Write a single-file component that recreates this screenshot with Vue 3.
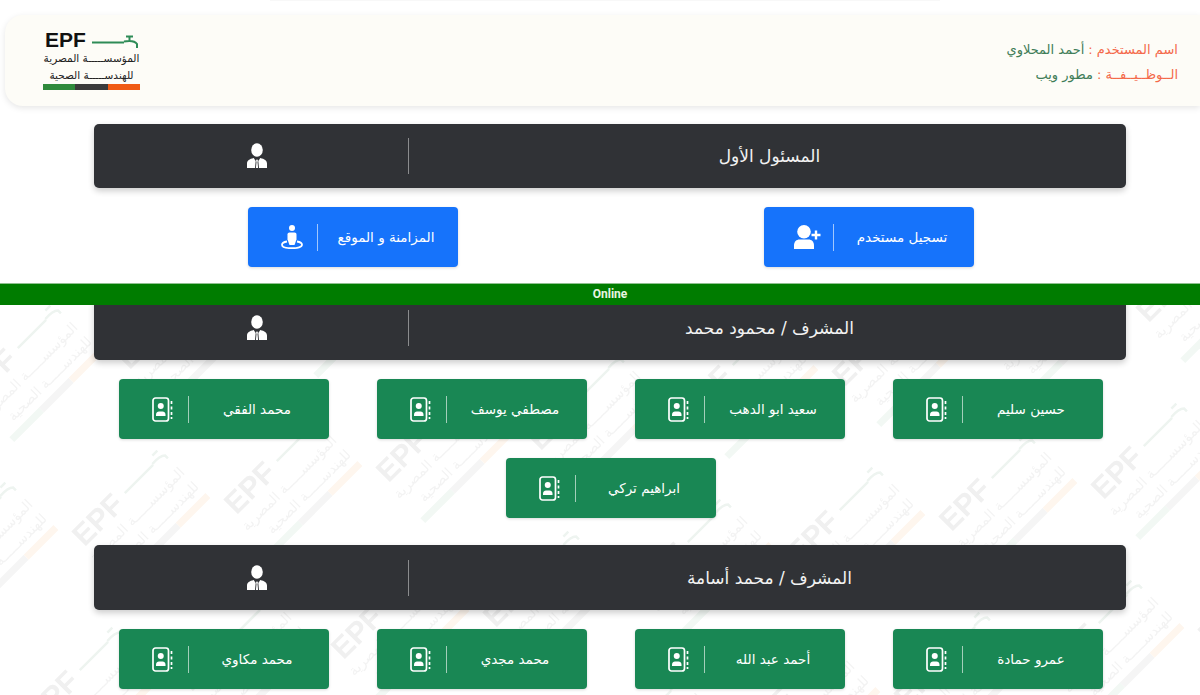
<script setup>
const ax = 152, ay = -32, bx = 107, by = 145
const marks = []
for (let m = -8; m <= 10; m++) {
  for (let n = -3; n <= 4; n++) {
    const x = 257 + m * ax + n * bx
    const y = 495 + m * ay + n * by
    if (x > -60 && x < 1260 && y > 270 && y < 770) marks.push({ id: `${m}_${n}`, x, y })
  }
}
const groups = [
  { title: 'المشرف / محمود محمد', rows: [['حسين سليم', 'سعيد ابو الدهب', 'مصطفي يوسف', 'محمد الفقي'], ['ابراهيم تركي']] },
  { title: 'المشرف / محمد أسامة', rows: [['عمرو حمادة', 'أحمد عبد الله', 'محمد مجدي', 'محمد مكاوي']] }
]
</script>

<template>
  <div class="page">
    <div class="top-sliver"></div>
    <svg class="watermark" width="1200" height="390" viewBox="0 305 1200 390" aria-hidden="true">
      <g v-for="k in marks" :key="k.id" :transform="`translate(${k.x} ${k.y}) rotate(-45)`">
        <text class="wm-epf" x="-29" y="0">EPF</text>
        <path d="M38 -10H78M78 -11c6-.5 12 0 15 3v4M84 -17h7" fill="none" stroke="#eef4f0" stroke-width="2.500" />
        <text class="wm-ar" x="95" y="19" text-anchor="end">المؤسســـــة المصرية</text>
        <text class="wm-ar" x="95" y="39" text-anchor="end">للهندســـــة الصحية</text>
        <rect x="-31" y="47" width="42" height="7" fill="#f2f8f4" />
        <rect x="11" y="47" width="42" height="7" fill="#f5f5f5" />
        <rect x="53" y="47" width="42" height="7" fill="#fef6ee" />
      </g>
    </svg>

    <header class="topbar">
      <div class="user">
        <div><span class="lbl">اسم المستخدم :</span><span class="val">أحمد المحلاوي</span></div>
        <div><span class="lbl">الــوظــيــفــة :</span><span class="val">مطور ويب</span></div>
      </div>
      <div class="logo">
        <div class="logo-top">
          <svg width="46" height="16" viewBox="0 0 46 16">
            <path d="M0 10.500H32M32 9.500c5-.8 11-.5 13 2.500v4M34 4.500h7M37.500 4.500v5" fill="none" stroke="#2e8b57" stroke-width="2" />
          </svg>
          <span class="logo-epf">EPF</span>
        </div>
        <div class="logo-ar">المؤسســـــة المصرية</div>
        <div class="logo-ar">للهندســـــة الصحية</div>
        <div class="logo-bar"><i class="c1"></i><i class="c2"></i><i class="c3"></i></div>
      </div>
    </header>

    <main class="content">
      <div class="head head-first">
        <div class="head-title">المسئول الأول</div>
        <div class="head-icon">
          <svg width="20" height="26" viewBox="0 0 20 26"><use href="#boss" /></svg>
        </div>
      </div>

      <div class="row row-blue">
        <button class="btn blue">
          <span class="btn-text">تسجيل مستخدم</span>
          <span class="btn-icon">
            <svg width="27" height="24" viewBox="0 0 27 24" fill="#fff">
              <circle cx="10" cy="6.800" r="6.800" />
              <path d="M0 24v-3.500C0 16.500 2.500 14.500 5.500 14.500h9c3 0 5.500 2 5.500 6V24z" />
              <path d="M17.500 10h9M22 5.500v9" stroke="#fff" stroke-width="2.400" fill="none" />
            </svg>
          </span>
        </button>
        <button class="btn blue">
          <span class="btn-text">المزامنة و الموقع</span>
          <span class="btn-icon">
            <svg width="22" height="24" viewBox="0 0 22 24" fill="#fff">
              <circle cx="11" cy="3" r="3" />
              <path d="M8.500 7.500h5c1.200 0 2 .8 2 2v5l-2 5.500h-5l-2-5.500v-5c0-1.200.8-2 2-2z" />
              <path d="M6 16.500C2.700 17 1 18.200 1 19.700 1 22 5.500 23.200 11 23.200s10-1.200 10-3.500c0-1.500-1.700-2.700-5-3.200" fill="none" stroke="#fff" stroke-width="1.800" />
            </svg>
          </span>
        </button>
      </div>

      <div class="online">Online</div>

      <template v-for="(g, gi) in groups" :key="gi">
        <div class="head" :class="gi === 0 ? 'head-under' : 'head-next'">
          <div class="head-title">{{ g.title }}</div>
          <div class="head-icon">
            <svg width="20" height="26" viewBox="0 0 20 26"><use href="#boss" /></svg>
          </div>
        </div>
        <div v-for="(r, ri) in g.rows" :key="ri" class="row row-green">
          <button v-for="name in r" :key="name" class="btn green">
            <span class="btn-text">{{ name }}</span>
            <span class="btn-icon">
              <svg width="21" height="25" viewBox="0 0 21 25" fill="none" stroke="#fff">
                <rect x="1" y="1" width="15.500" height="23" rx="2.500" stroke-width="1.700" />
                <circle cx="8.750" cy="9" r="3" fill="#fff" stroke="none" />
                <path d="M4 19v-1.500c0-2 1.500-3 3-3h3.500c1.500 0 3 1 3 3V19z" fill="#fff" stroke="none" />
                <path d="M19.500 4v3M19.500 9.500v3M19.500 15v3M19.500 20v2" stroke-width="1.700" />
              </svg>
            </span>
          </button>
        </div>
      </template>
    </main>

    <svg width="0" height="0" class="defs" aria-hidden="true">
      <symbol id="boss" viewBox="0 0 20 26">
        <ellipse cx="10" cy="7" rx="5.800" ry="6.800" fill="#fff" />
        <path d="M0 25v-4.500c0-3 2.500-4.500 6.700-5.500l2 3-.7 7zM20 25v-4.500c0-3-2.500-4.500-6.700-5.500l-2 3 .7 7z" fill="#fff" />
        <path d="M10 16l1 1.800-.5 1.200.6 6H8.900l.6-6-.5-1.200z" fill="#fff" />
      </symbol>
    </svg>
  </div>
</template>

<style>
html, body { margin: 0; background: #fff; }
</style>

<style scoped>
.page {
  position: relative;
  width: 1200px;
  height: 695px;
  overflow: hidden;
  background: #fff;
  font-family: "DejaVu Sans", "Noto Sans", sans-serif;
}
.defs { position: absolute; }
.top-sliver { position: absolute; left: 270px; top: 0; width: 670px; height: 1px; background: #f8f8f8; }
.watermark { position: absolute; left: 0; top: 305px; filter: blur(.7px); }
.wm-epf { font: 700 30px "Liberation Sans", sans-serif; fill: #f0f0f0; }
.wm-ar { font: 14px "DejaVu Sans", sans-serif; fill: #f3f3f3; }

.topbar {
  position: relative;
  box-sizing: border-box;
  margin: 15px 0 0 5px;
  width: 1195px;
  height: 91px;
  background: #fdfcf7;
  border-radius: 18px 0 0 18px;
  box-shadow: 0 2px 6px rgba(0, 0, 0, .1);
  display: flex;
  justify-content: space-between;
  align-items: center;
  padding: 0 22px 0 38px;
  direction: rtl;
}
.user { font-size: 13px; line-height: 25px; padding-top: 3px; }
.lbl { color: #f4694a; margin-left: 4px; }
.val { color: #3f7d58; }
.logo { width: 97px; direction: ltr; color: #222; margin-top: -2px; }
.logo-top { display: flex; flex-direction: row-reverse; justify-content: space-between; align-items: flex-end; height: 20px; }
.logo-top svg { margin-right: 2px; margin-bottom: 2px; }
.logo-epf { font: 700 21px/20px "Liberation Sans", sans-serif; color: #111; margin-left: 2px; }
.logo-ar { font-size: 10.500px; line-height: 17px; text-align: center; direction: rtl; white-space: nowrap; font-weight: 500; }
.logo-bar { display: flex; height: 6px; margin-top: 0; }
.logo-bar i { flex: 1; }
.c1 { background: #2f8a3c; }
.c2 { background: #3b3b3b; }
.c3 { background: #f05a14; }

.content {
  position: relative;
  direction: rtl;
  display: flex;
  flex-direction: column;
  padding-left: 22px;
}
.head {
  align-self: center;
  margin-right: 2px;
  width: 1032px;
  height: 64px;
  box-sizing: border-box;
  background: #303236;
  border-radius: 5px;
  box-shadow: 0 3px 6px rgba(0, 0, 0, .2);
  display: flex;
  align-items: center;
  color: #f2f2f2;
  font-size: 17px;
}
.head-first { margin-top: 18px; }
.head-under { margin-top: -9px; }
.head-next { margin-top: 27px; height: 65px; }
.head-title { width: 713px; padding-left: 4px; height: 36px; line-height: 36px; text-align: center; border-left: 1px solid #8b8c8e; }
.head-icon { flex: 1; display: flex; justify-content: center; }
.head-icon svg { display: block; margin-left: 12px; }

.row { display: flex; justify-content: center; }
.row-blue { gap: 306px; margin-top: 19px; }
.row-green { gap: 48px; margin-top: 19px; }
.btn {
  width: 210px;
  height: 60px;
  border: 0;
  border-radius: 4px;
  padding: 0;
  display: flex;
  align-items: center;
  color: #fff;
  font: inherit;
  font-size: 13.500px;
  box-shadow: 0 1px 3px rgba(0, 0, 0, .15);
}
.blue { background: #1673fb; }
.green { background: #198754; }
.btn-text { box-sizing: border-box; width: 141px; padding-right: 4px; height: 27px; line-height: 27px; text-align: center; border-left: 1px solid rgba(255, 255, 255, .6); white-space: nowrap; }
.btn-icon { flex: 1; display: flex; justify-content: center; padding-left: 18px; }
.btn-icon svg { display: block; }

.online {
  margin: 16px 0 0 -22px;
  height: 21px;
  background: #007c00;
  color: #e9f5e0;
  font: 700 12px/21px "Roboto", sans-serif;
  text-align: center;
  direction: ltr;
  padding-left: 20px;
  position: relative;
  z-index: 2;
  border-top: 1px solid #8fc08f;
}
</style>
